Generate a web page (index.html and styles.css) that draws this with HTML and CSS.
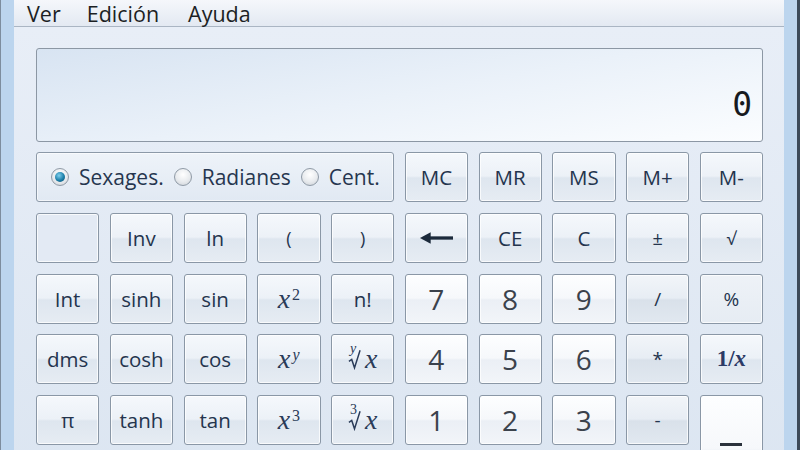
FILE: index.html
```html
<!DOCTYPE html>
<html lang="es">
<head>
  <meta charset="UTF-8" />
  <title>Calculadora</title>
  <link rel="stylesheet" href="styles.css">
</head>
<body>
  <div class="window">
    <div class="frame">
      <nav class="menubar">
        <span>Ver</span>
        <span>Edición</span>
        <span>Ayuda</span>
      </nav>

      <main class="calc">
        <div class="display"><span class="value">0</span></div>

        <div class="keys">
          <div class="angles">
            <label class="radio"><span class="dot on"></span>Sexages.</label>
            <label class="radio"><span class="dot"></span>Radianes</label>
            <label class="radio"><span class="dot"></span>Cent.</label>
          </div>
          <button class="key">MC</button>
          <button class="key">MR</button>
          <button class="key">MS</button>
          <button class="key">M+</button>
          <button class="key">M-</button>

          <button class="key blank"></button>
          <button class="key">Inv</button>
          <button class="key">ln</button>
          <button class="key small">(</button>
          <button class="key small">)</button>
          <button class="key">
            <svg class="back" viewBox="0 0 34 12"><path d="M9 6H34" /><polygon points="0,6 11,0 11,12" /></svg>
          </button>
          <button class="key">CE</button>
          <button class="key">C</button>
          <button class="key small">±</button>
          <button class="key small">√</button>

          <button class="key">Int</button>
          <button class="key">sinh</button>
          <button class="key">sin</button>
          <button class="key math"><i>x</i><sup>2</sup></button>
          <button class="key">n!</button>
          <button class="key num">7</button>
          <button class="key num">8</button>
          <button class="key num">9</button>
          <button class="key op">/</button>
          <button class="key flat">%</button>

          <button class="key">dms</button>
          <button class="key">cosh</button>
          <button class="key">cos</button>
          <button class="key math"><i>x</i><sup><i>y</i></sup></button>
          <button class="key math">
            <span class="root">
              <i class="idx">y</i>
              <svg class="rad" viewBox="0 0 14 22"><path d="M1 13L4 11L7 20L13 1" /></svg>
            </span><i class="rx">x</i>
          </button>
          <button class="key num">4</button>
          <button class="key num">5</button>
          <button class="key num">6</button>
          <button class="key op">*</button>
          <button class="key math recip">1/<i>x</i></button>

          <button class="key">π</button>
          <button class="key">tanh</button>
          <button class="key">tan</button>
          <button class="key math"><i>x</i><sup>3</sup></button>
          <button class="key math">
            <span class="root">
              <span class="idx">3</span>
              <svg class="rad" viewBox="0 0 14 22"><path d="M1 13L4 11L7 20L13 1" /></svg>
            </span><i class="rx">x</i>
          </button>
          <button class="key num">1</button>
          <button class="key num">2</button>
          <button class="key num">3</button>
          <button class="key op">-</button>
          <button class="key num equals"><span class="eq"></span></button>
        </div>
      </main>
    </div>
  </div>
</body>
</html>
```

FILE: styles.css
```css
body {
  margin: 0;
  width: 800px;
  height: 450px;
  overflow: hidden;
  font-family: 'Open Sans', sans-serif;
  background: #dce6f2;
}
.window {
  height: 450px;
  border-left: 1px solid #7d8d9e;
  border-right: 3px solid #3b4a5a;
  background: #bcd5ee;
  padding: 0 13px 0 13px;
}
.frame {
  height: 450px;
  background: #e2eaf5;
  overflow: hidden;
}
.menubar {
  height: 26px;
  display: flex;
  align-items: center;
  padding-left: 13px;
  background: linear-gradient(#f5f7fb, #e3e9f2);
  border-bottom: 1px solid #aab5c3;
  font-size: 21.5px;
  color: #1c1f24;
}
.menubar span {
  margin-right: 26px;
}
.menubar span:nth-child(2) {
  margin-right: 29px;
}
.calc {
  padding: 21px 21px 0 22px;
  background: linear-gradient(#e8eef7, #dbe5f1);
}
.display {
  height: 94px;
  box-sizing: border-box;
  border: 1px solid #8c97a4;
  border-radius: 3px;
  background: linear-gradient(170deg, #d8e4f2 0%, #eaf1f9 50%, #fbfdff 100%);
  display: flex;
  justify-content: flex-end;
  align-items: flex-end;
  padding: 0 10px 20px 0;
}
.value {
  font-family: 'DejaVu Sans Mono', monospace;
  font-size: 33px;
  line-height: 1;
  color: #161a1f;
}
.keys {
  margin-top: 10px;
  display: grid;
  grid-template-columns: repeat(10, 1fr);
  grid-auto-rows: 50px;
  column-gap: 10.5px;
  row-gap: 10.8px;
}
.angles {
  grid-column: span 5;
  border: 1px solid #8c99a8;
  border-radius: 3px;
  background: linear-gradient(#eef3f9, #e1e9f3);
  box-shadow: inset 0 0 0 1px rgba(255,255,255,0.6);
  display: flex;
  align-items: center;
  padding-left: 14px;
  gap: 10px;
  font-size: 21px;
  color: #26364f;
}
.radio {
  display: flex;
  align-items: center;
  gap: 10px;
}
.dot {
  width: 16px;
  height: 16px;
  border-radius: 50%;
  border: 1px solid #8f9aa6;
  background: radial-gradient(circle at 50% 35%, #ffffff 0%, #e8ebee 55%, #c9ced4 100%);
  display: flex;
  align-items: center;
  justify-content: center;
}
.dot.on::after {
  content: "";
  width: 10px;
  height: 10px;
  border-radius: 50%;
  background: radial-gradient(circle at 40% 35%, #7fd0ee 0%, #1c7ea8 55%, #0d4c6d 100%);
}
.key {
  margin: 0;
  padding: 0;
  border: 1px solid #8a97a6;
  border-radius: 3px;
  background: linear-gradient(#f5f8fc 0%, #ecf1f7 48%, #dee6ef 52%, #e6ecf3 100%);
  box-shadow: inset 0 0 0 1px rgba(255,255,255,0.75);
  display: flex;
  align-items: center;
  justify-content: center;
  font-family: 'Open Sans', sans-serif;
  font-size: 20.5px;
  color: #24344d;
}
.key.small {
  font-size: 18px;
}
.key.blank {
  background: #e3eaf4;
}
.key.num {
  background: linear-gradient(#fdfeff 0%, #f6f8fb 48%, #ebeff5 52%, #f2f5f9 100%);
  font-size: 28px;
  color: #3b424c;
}
.key.op {
  background: linear-gradient(#f2f5f9 0%, #e7edf4 48%, #d9e1ea 52%, #e1e8f0 100%);
  font-size: 19px;
}
.key.flat {
  background: linear-gradient(#eef2f7, #e6ecf3);
  font-size: 19px;
}
.key.math {
  font-family: 'Liberation Serif', serif;
  font-size: 28px;
  color: #2a3b58;
}
.key.math sup {
  font-size: 16px;
  line-height: 0;
  position: relative;
  top: -4px;
  margin-left: 2px;
}
.root {
  display: inline-flex;
  align-items: flex-end;
  position: relative;
  height: 24px;
}
.rad {
  width: 13px;
  height: 21px;
  margin-bottom: 1px;
}
.rad path {
  fill: none;
  stroke: #2a3b58;
  stroke-width: 1.6;
}
.idx {
  font-size: 14px;
  line-height: 1;
  position: absolute;
  left: 2px;
  top: -5px;
}
.key.math .rx {
  margin-left: 4px;
}
.key.recip {
  font-size: 23px;
  font-weight: bold;
  color: #2b3a66;
}
.back {
  width: 33px;
  height: 12px;
}
.back path {
  stroke: #1c2a3b;
  stroke-width: 3.4;
}
.back polygon {
  fill: #1c2a3b;
}
.equals {
  grid-row: span 2;
  align-items: flex-start;
  padding-top: 47px;
}
.eq {
  width: 22px;
  height: 3px;
  background: #2a313b;
}
```
